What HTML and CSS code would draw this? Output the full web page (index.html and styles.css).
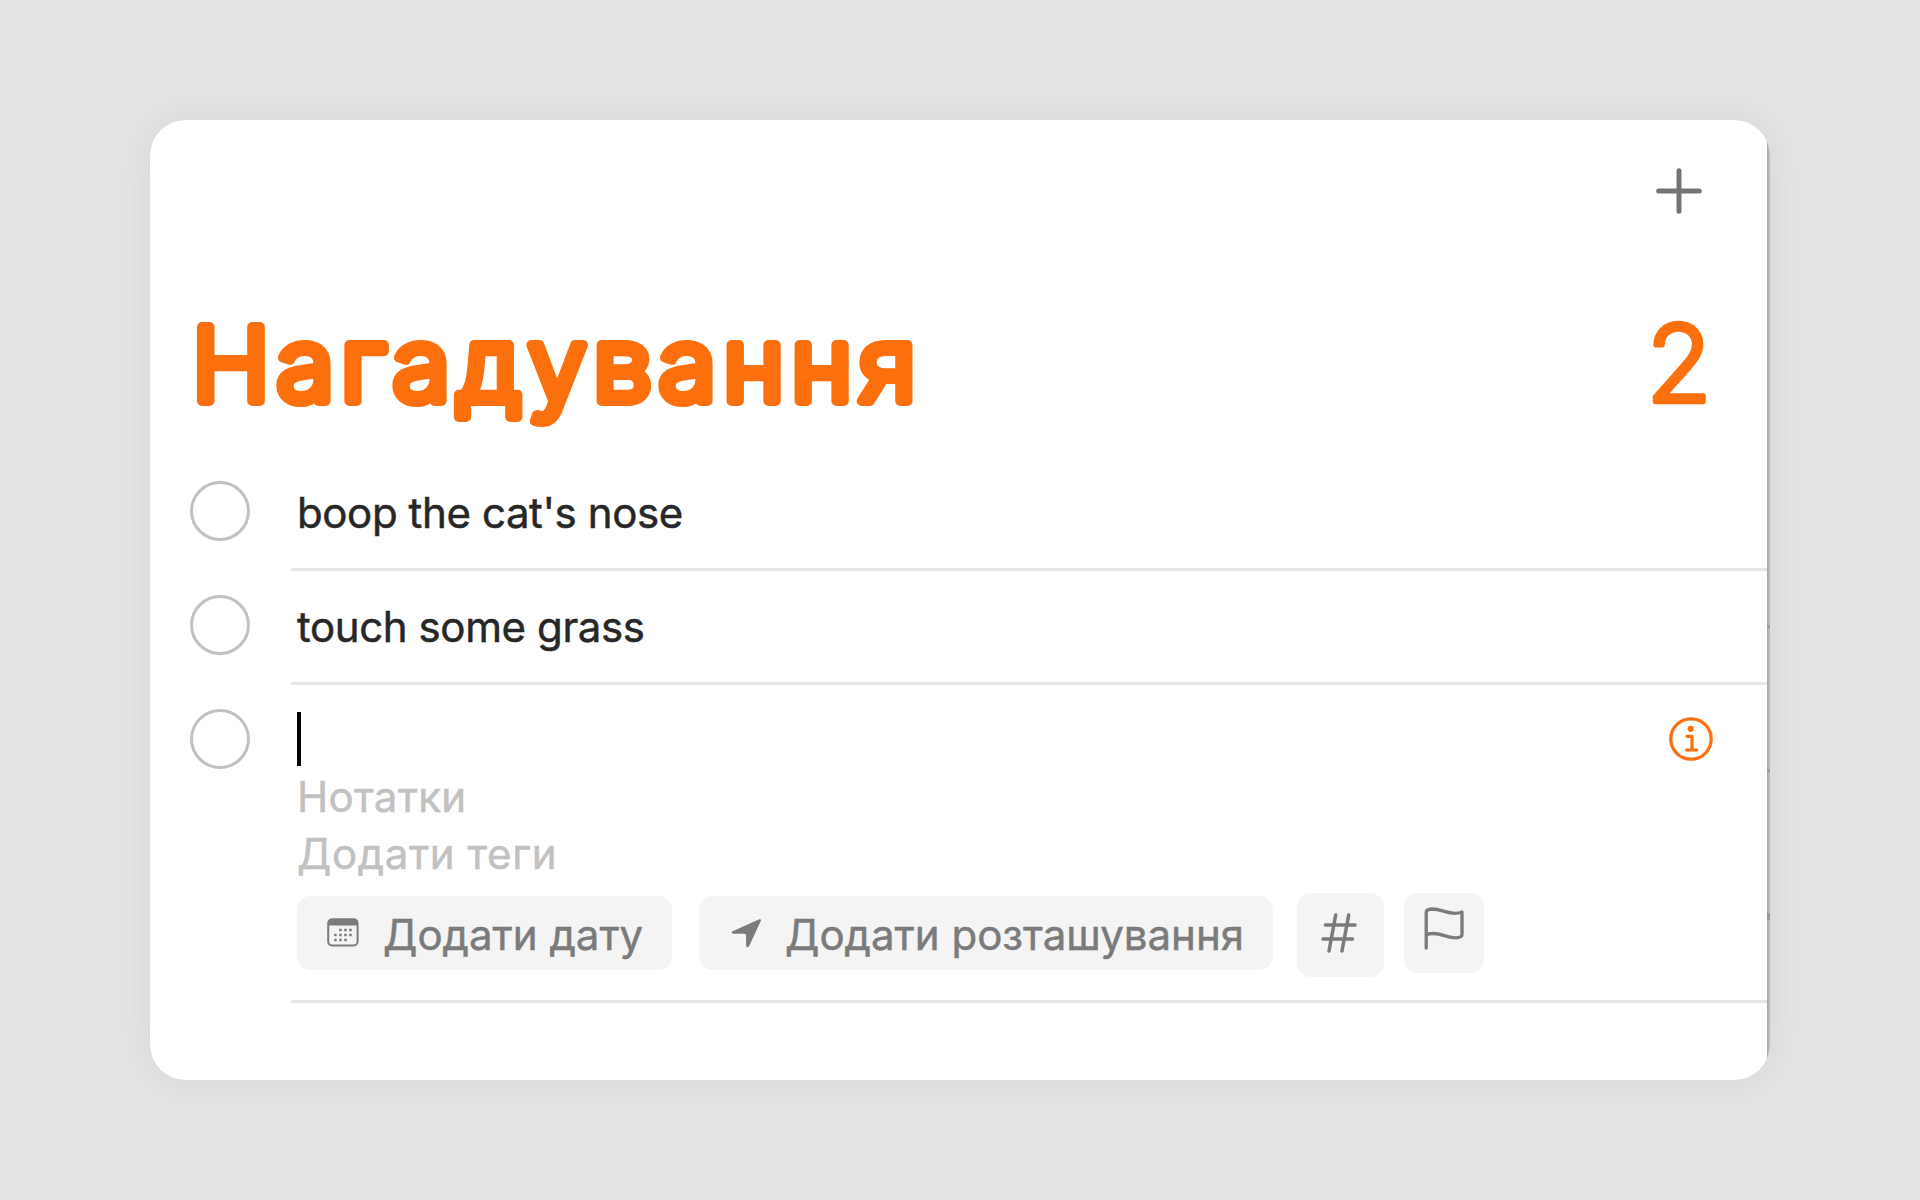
FILE: index.html
```html
<!DOCTYPE html>
<html lang="uk">
<head>
    <meta charset="UTF-8">
    <meta name="viewport" content="width=device-width, initial-scale=1.0">
    <title>Нагадування</title>
    <link rel="stylesheet" href="styles.css">
</head>
<body>
    <main class="window">
        <div class="toolbar">
            <svg class="plus" viewBox="0 0 46 46"><path d="M23 2.7v40.6M2.7 23h40.6"/></svg>
        </div>

        <header class="header">
            <svg class="title" role="heading" viewBox="0 0 740 120"><text x="-1" y="85.5" textLength="703" transform="scale(1.03 1)">Нагадування</text></svg>
            <svg class="count" viewBox="0 0 60 120"><text x="31" y="87" text-anchor="middle">2</text></svg>
        </header>

        <ul class="list">
            <li class="item">
                <span class="check"></span>
                <div class="body">
                    <p class="name">boop the cat's nose</p>
                </div>
            </li>
            <li class="item">
                <span class="check"></span>
                <div class="body">
                    <p class="name">touch some grass</p>
                </div>
            </li>
            <li class="item editing">
                <span class="check"></span>
                <div class="body">
                    <div class="entry">
                        <span class="caret"></span>
                        <svg class="info" viewBox="0 0 44 44">
                            <circle cx="22" cy="22" r="20.2"/>
                            <circle class="dot" cx="21.7" cy="11.8" r="3.1"/>
                            <path d="M18 19.3h5v13.4M17.5 33h10.3"/>
                        </svg>
                    </div>
                    <p class="hint notes">Нотатки</p>
                    <p class="hint tags">Додати теги</p>
                    <div class="chips">
                        <button class="chip date">
                            <svg class="calendar" viewBox="0 0 32 29">
                                <rect x="1.2" y="1.2" width="29.4" height="26.2" rx="4"/>
                                <path class="fill" d="M1 7.5V4.5Q1 1 4.5 1h23Q31 1 31 4.5v3z"/>
                                <path class="dots" d="M12.2 12h14M7.2 17h19M7.2 22h14"/>
                            </svg>
                            <span>Додати дату</span>
                        </button>
                        <button class="chip place">
                            <svg class="arrow" viewBox="0 0 31 30"><path d="M1.6 13.2 28.3 1.3Q30.4.7 29.8 2.9L18 28.2Q16.5 30.2 15.1 28V17Q15.1 15.7 13.7 15.7H2.2Q-.4 14.8 1.6 13.2z"/></svg>
                            <span>Додати розташування</span>
                        </button>
                        <button class="chip hash">
                            <svg viewBox="0 0 36 40"><path d="M14.7 2 8 38M27.7 2 21 38M4.5 12h29.5M2 26h29.5"/></svg>
                        </button>
                        <button class="chip flag">
                            <svg viewBox="0 0 40 43"><path d="M2.2 41V5.5Q2.2 2.3 8 2c9 0 14 4.3 23 4.3 3 0 5.5-.7 7-1.3v23q0 2.3-6.5 2.8c-8 0-14-4.3-22-4.3-3.5 0-6 .5-7.3 1.8"/></svg>
                        </button>
                    </div>
                </div>
            </li>
        </ul>
    </main>
</body>
</html>
```
FILE: styles.css
```css
* {
    box-sizing: border-box;
}
body {
    margin: 0;
    padding: 120px 150px;
    background: #e4e4e4;
    font-family: Inter, "Liberation Sans", sans-serif;
}
.window {
    height: 960px;
    border-radius: 36px;
    background:
        linear-gradient(#999, #999) 100% 505px / 3px 3px no-repeat,
        linear-gradient(#999, #999) 100% 649px / 3px 3px no-repeat,
        linear-gradient(#999, #999) 100% 793px / 3px 7px no-repeat,
        linear-gradient(to right, #fff 1617px, #a6a6a6 1617px, #c4c4c4 1620px);
    box-shadow: 0 0 40px rgba(0, 0, 0, 0.07);
    overflow: hidden;
}
svg {
    display: block;
    fill: none;
    stroke: #7b7b7b;
    stroke-width: 3;
    stroke-linecap: round;
    stroke-linejoin: round;
}

/* header */
.toolbar {
    display: flex;
    justify-content: flex-end;
    height: 195px;
    padding: 48px 68px 0 0;
}
.plus {
    width: 46px;
    height: 46px;
    stroke: #757575;
    stroke-width: 5;
}
.header {
    display: flex;
    justify-content: space-between;
    height: 142px;
    padding: 0 62px 0 43px;
}
.title, .count {
    height: 120px;
    fill: #fb6f0d;
    stroke: #fb6f0d;
    overflow: visible;
}
.title {
    width: 740px;
    font-size: 102px;
    font-weight: 300;
    stroke-width: 10;
}
.count {
    width: 60px;
    font-size: 107px;
    font-weight: 300;
    stroke-width: 4.3;
}

/* list */
.list {
    margin: 0;
    padding: 0;
    list-style: none;
}
.item {
    display: flex;
    height: 114px;
    padding: 0 3px 0 40px;
}
.check {
    width: 60px;
    height: 60px;
    margin: 24px 41px 0 0;
    border: 3px solid #c1c1c1;
    border-radius: 50%;
}
.body {
    flex: 1;
    padding: 28px 0 0 6px;
    border-bottom: 3px solid #e5e5e5;
}
p {
    margin: 0;
    font-size: 42px;
    line-height: 56px;
    white-space: nowrap;
}
.name {
    color: #272727;
    letter-spacing: -0.4px;
    -webkit-text-stroke: 0.5px;
}
.editing {
    height: 318px;
}
.editing .body {
    padding-top: 27px;
}
.entry {
    display: flex;
    justify-content: space-between;
    height: 57px;
    padding-right: 54px;
}
.caret {
    width: 4px;
    height: 54px;
    background: #000;
}
.info {
    width: 44px;
    height: 44px;
    margin-top: 5px;
    stroke: #fb6f0d;
    stroke-width: 3.2;
}
.info .dot {
    fill: #fb6f0d;
    stroke: none;
}
.hint {
    color: #c1c1c1;
    -webkit-text-stroke: 0.5px;
}
.notes {
    letter-spacing: 0.3px;
}
.tags {
    margin-top: 1px;
    letter-spacing: 0.6px;
}

/* buttons under the new reminder */
.chips {
    display: flex;
    align-items: flex-start;
    margin-top: 11px;
}
.chip {
    display: flex;
    align-items: flex-start;
    height: 74px;
    margin: 3px 27px 0 0;
    padding: 0;
    border: 0;
    border-radius: 14px;
    background: #f4f4f4;
    color: #7b7b7b;
    font-family: inherit;
    font-size: 42px;
    line-height: 77px;
    white-space: nowrap;
    -webkit-text-stroke: 0.5px;
}
.date {
    width: 375px;
}
.place {
    width: 574px;
    margin-right: 23.5px;
}
.calendar {
    width: 32px;
    height: 29px;
    margin: 22px 24px 0 30px;
    stroke-width: 2;
}
.calendar .fill {
    fill: #7b7b7b;
    stroke: none;
}
.calendar .dots {
    stroke-width: 2.5;
    stroke-linecap: butt;
    stroke-dasharray: 2.5;
}
.arrow {
    width: 31px;
    height: 30px;
    margin: 22px 23px 0 32px;
    fill: #7b7b7b;
    stroke: none;
}
.hash {
    width: 87px;
    height: 84px;
    margin: 0 20px 0 0;
    padding: 20px 0 0 24.5px;
}
.hash svg {
    width: 36px;
    height: 40px;
    stroke-width: 3.5;
}
.flag {
    width: 80px;
    height: 80px;
    margin: 0;
    padding: 14px 0 0 20.5px;
}
.flag svg {
    width: 40px;
    height: 43px;
    stroke-width: 3.3;
}
```
